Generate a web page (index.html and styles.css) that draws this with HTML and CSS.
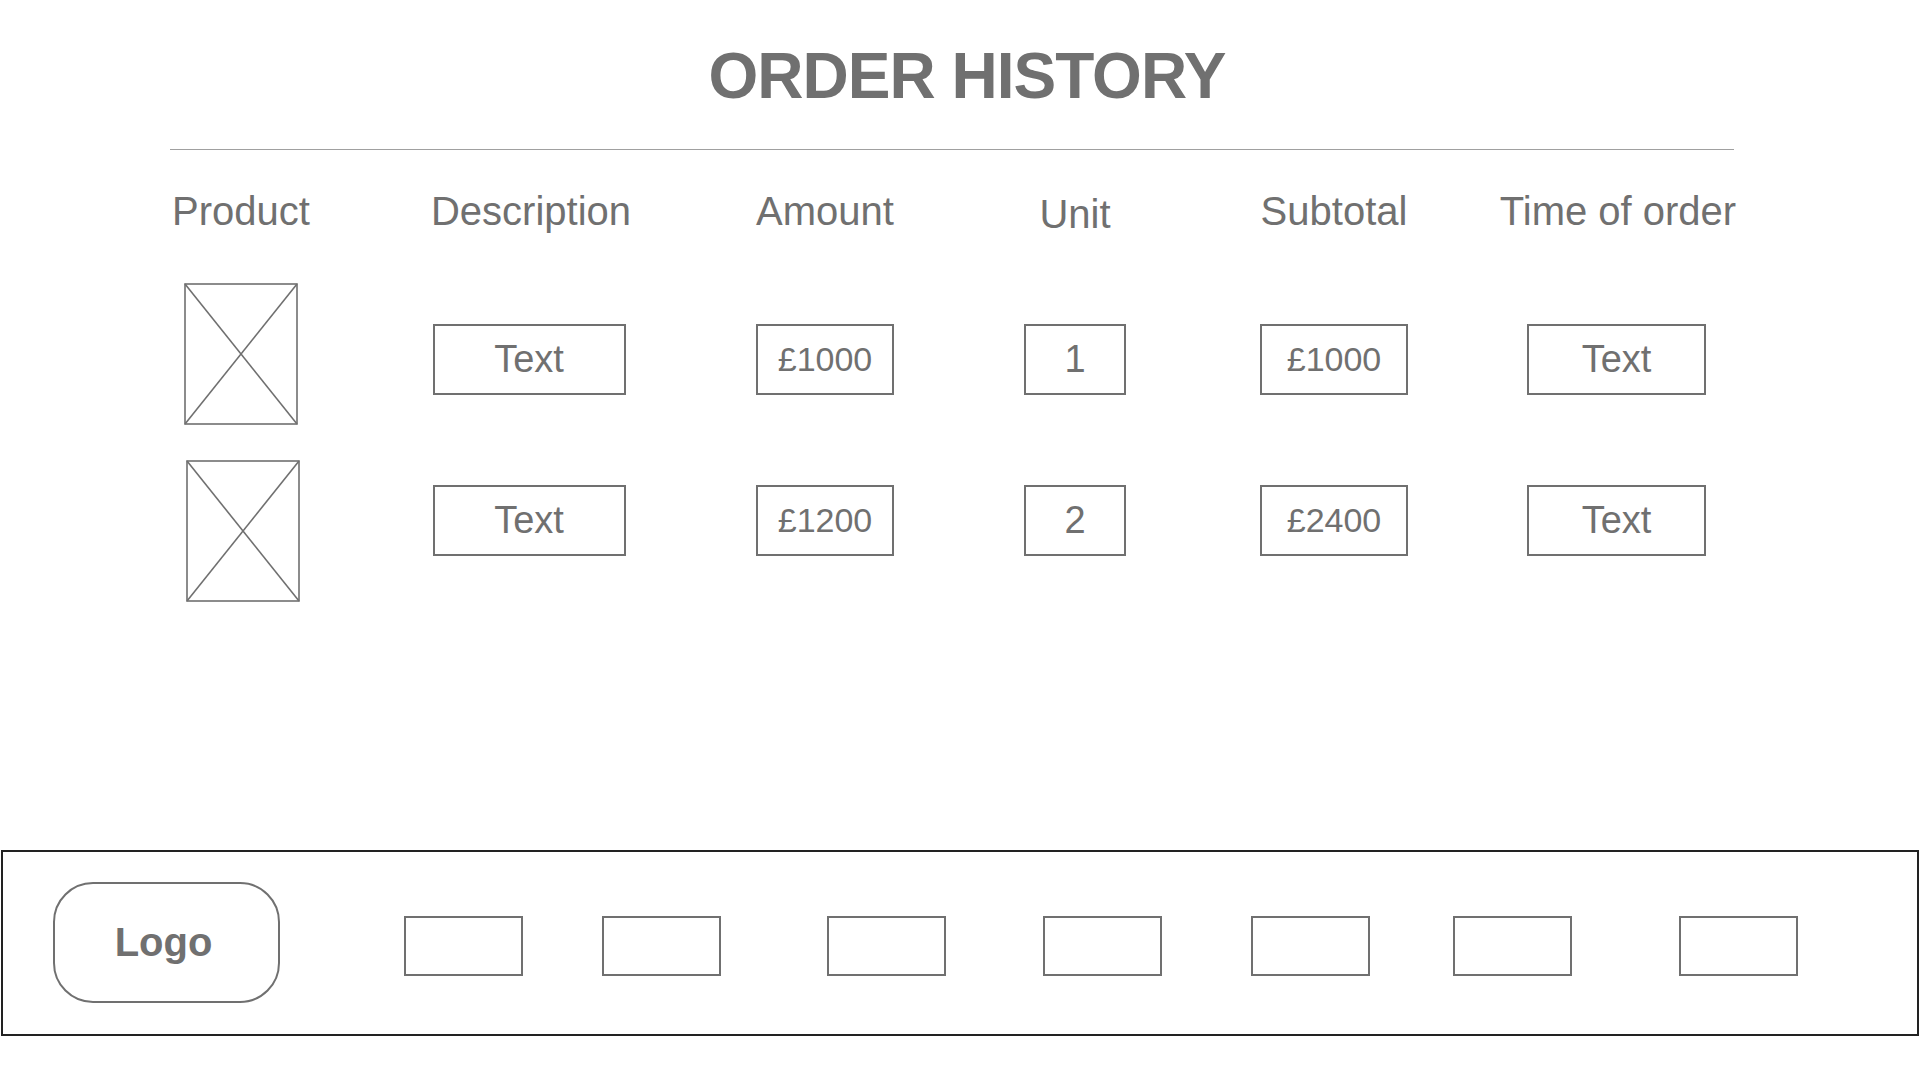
FILE: index.html
```html
<!DOCTYPE html>
<html lang="en">
<head>
    <meta charset="UTF-8">
    <meta name="viewport" content="width=device-width, initial-scale=1.0">
    <title>Order History</title>
    <link rel="stylesheet" href="styles.css">
</head>
<body>
    <h1 class="title">ORDER HISTORY</h1>
    <div class="rule"></div>

    <div class="orders">
        <div class="row head">
            <div>Product</div>
            <div>Description</div>
            <div>Amount</div>
            <div class="unit-head">Unit</div>
            <div>Subtotal</div>
            <div>Time of order</div>
        </div>

        <div class="row item">
            <svg class="pic" viewBox="0 0 114 142">
                <rect x="1" y="1" width="112" height="140" />
                <line x1="1" y1="1" x2="113" y2="141" />
                <line x1="113" y1="1" x2="1" y2="141" />
            </svg>
            <div class="box desc">Text</div>
            <div class="box amount">£1000</div>
            <div class="box unit">1</div>
            <div class="box subtotal">£1000</div>
            <div class="box time">Text</div>
        </div>

        <div class="row item">
            <svg class="pic" viewBox="0 0 114 142">
                <rect x="1" y="1" width="112" height="140" />
                <line x1="1" y1="1" x2="113" y2="141" />
                <line x1="113" y1="1" x2="1" y2="141" />
            </svg>
            <div class="box desc">Text</div>
            <div class="box amount">£1200</div>
            <div class="box unit">2</div>
            <div class="box subtotal">£2400</div>
            <div class="box time">Text</div>
        </div>
    </div>

    <div class="footer">
        <div class="logo">Logo</div>
        <div class="nav n1"></div>
        <div class="nav n2"></div>
        <div class="nav n3"></div>
        <div class="nav n4"></div>
        <div class="nav n5"></div>
        <div class="nav n6"></div>
        <div class="nav n7"></div>
    </div>
</body>
</html>
```

FILE: styles.css
```css
html,
body {
    margin: 0;
    background: #fff;
}
body {
    font-family: "Liberation Sans", Arial, sans-serif;
    color: #707070;
}
.title {
    margin: 0;
    padding: 44px 0 0 14px;
    font-size: 64px;
    line-height: 64px;
    font-weight: bold;
    letter-spacing: -1px;
    text-align: center;
}
.rule {
    margin: 41px 0 0 170px;
    width: 1564px;
    border-top: 1px solid #a0a0a0;
}
.orders {
    padding-left: 170px;
}
.row {
    display: grid;
    grid-template-columns: 142px 438px 150px 350px 168px 400px;
    justify-items: center;
    align-items: start;
}
.head {
    margin-top: 37px;
    font-size: 40px;
    line-height: 48px;
}
.unit-head {
    position: relative;
    top: 3px;
}
.item {
    margin-top: 48px;
}
.item .box {
    margin-top: 41px;
}
.item + .item {
    margin-top: 35px;
}
.item + .item .pic {
    margin-left: 3px;
}
.item + .item .box {
    margin-top: 25px;
}
.pic {
    width: 114px;
    height: 142px;
    display: block;
}
.pic rect,
.pic line {
    fill: none;
    stroke: #707070;
    stroke-width: 1.6;
}
.box {
    box-sizing: border-box;
    height: 71px;
    border: 2px solid #707070;
    display: flex;
    align-items: center;
    justify-content: center;
    font-size: 38px;
}
.desc {
    width: 193px;
    margin-left: -4px;
}
.amount {
    width: 138px;
    font-size: 34px;
}
.unit {
    width: 102px;
}
.subtotal {
    width: 148px;
    font-size: 34px;
}
.time {
    width: 179px;
    margin-left: -3px;
}
.footer {
    box-sizing: border-box;
    margin: 248px 1px 0 1px;
    height: 186px;
    border: 2px solid #222;
    display: flex;
    align-items: center;
    padding-left: 50px;
}
.logo {
    box-sizing: border-box;
    width: 227px;
    height: 121px;
    margin-top: -2px;
    padding-right: 6px;
    border: 2px solid #707070;
    border-radius: 40px;
    display: flex;
    align-items: center;
    justify-content: center;
    font-size: 40px;
    font-weight: bold;
}
.nav {
    box-sizing: border-box;
    width: 119px;
    height: 60px;
    margin-top: 6px;
    border: 2px solid #707070;
}
.n1 { margin-left: 124px; }
.n2 { margin-left: 79px; }
.n3 { margin-left: 106px; }
.n4 { margin-left: 97px; }
.n5 { margin-left: 89px; }
.n6 { margin-left: 83px; }
.n7 { margin-left: 107px; }
```
